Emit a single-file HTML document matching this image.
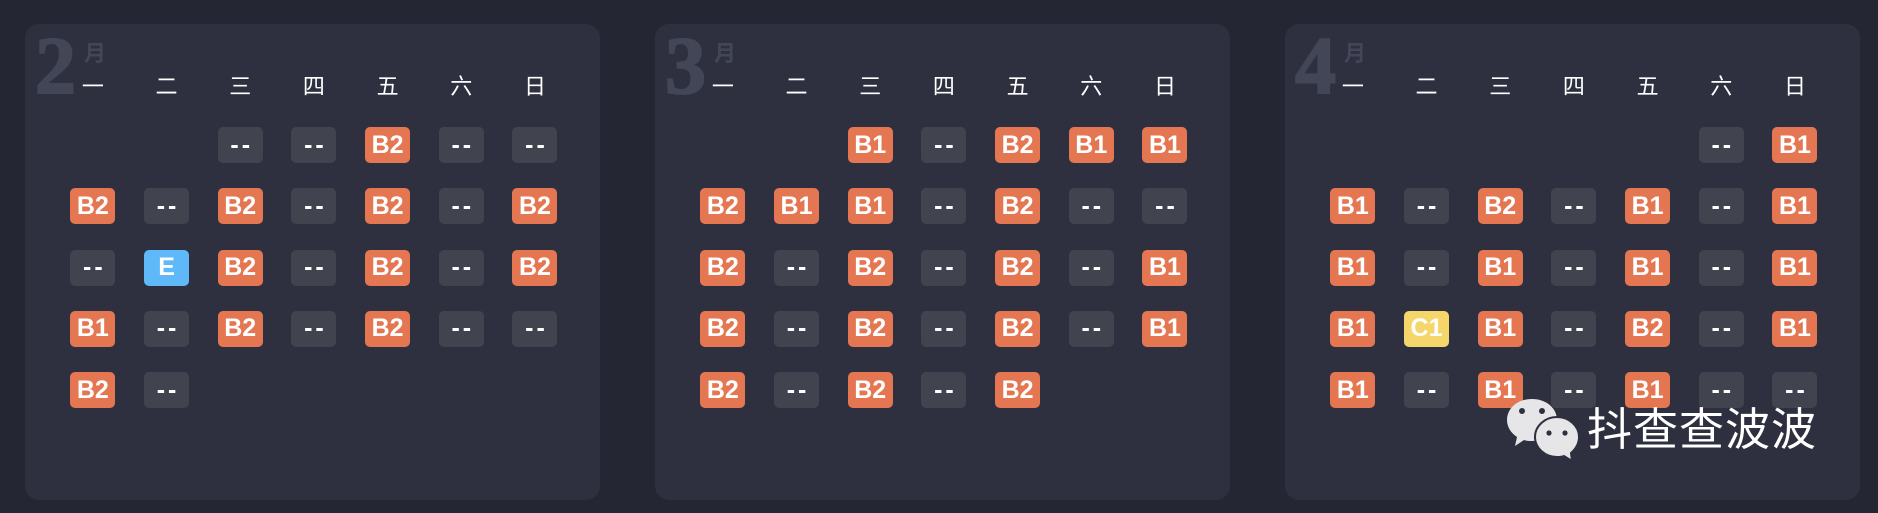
<!DOCTYPE html>
<html><head><meta charset="utf-8"><style>
*{margin:0;padding:0;box-sizing:border-box}
body{width:1878px;height:513px;background:#242633;position:relative;overflow:hidden;font-family:"Liberation Sans","Noto Sans CJK SC",sans-serif}
.p{position:absolute;top:24px;width:575px;height:476px;background:#2e3040;border-radius:14px}
.m{position:absolute;left:10px;top:1px;font-family:"Liberation Serif",serif;font-weight:900;font-size:82px;color:#424656;line-height:1;-webkit-text-stroke:2px #424656}
.y{position:absolute;left:59px;top:12px;font-family:"Noto Sans CJK SC",sans-serif;font-weight:bold;font-size:22px;color:#424656}
.h{position:absolute;left:31px;top:46px;display:flex}
.h span{width:73.7px;text-align:center;color:#fff;font-family:"Noto Sans CJK SC",sans-serif;font-size:22px;line-height:30px}
.g{position:absolute;left:31px;top:103px}
.r{display:flex;height:61.3px}
.r span{width:73.7px;display:flex;justify-content:center}
.r b{width:45px;height:36px;border-radius:5px;color:#fff;font-family:"Liberation Sans Narrow","Liberation Sans",sans-serif;font-weight:bold;font-size:25px;display:flex;align-items:center;justify-content:center}
.d{background:#41434f;letter-spacing:3px;text-indent:3px}
.o{background:#e57652}.e{background:#5fb8f8}.c{background:#f5d66a}
.wm{position:absolute;left:1587px;top:396px;color:#fff;font-family:"Noto Sans CJK SC",sans-serif;font-size:45px;line-height:60px;letter-spacing:1px}
</style></head><body>

<div class="p" style="left:25px">
<div class="m">2</div><div class="y">月</div>
<div class="h"><span>一</span><span>二</span><span>三</span><span>四</span><span>五</span><span>六</span><span>日</span></div>
<div class="g">
<div class="r"><span></span><span></span><span><b class="d">--</b></span><span><b class="d">--</b></span><span><b class="o">B2</b></span><span><b class="d">--</b></span><span><b class="d">--</b></span></div>
<div class="r"><span><b class="o">B2</b></span><span><b class="d">--</b></span><span><b class="o">B2</b></span><span><b class="d">--</b></span><span><b class="o">B2</b></span><span><b class="d">--</b></span><span><b class="o">B2</b></span></div>
<div class="r"><span><b class="d">--</b></span><span><b class="e">E</b></span><span><b class="o">B2</b></span><span><b class="d">--</b></span><span><b class="o">B2</b></span><span><b class="d">--</b></span><span><b class="o">B2</b></span></div>
<div class="r"><span><b class="o">B1</b></span><span><b class="d">--</b></span><span><b class="o">B2</b></span><span><b class="d">--</b></span><span><b class="o">B2</b></span><span><b class="d">--</b></span><span><b class="d">--</b></span></div>
<div class="r"><span><b class="o">B2</b></span><span><b class="d">--</b></span></div>
</div></div>

<div class="p" style="left:655px">
<div class="m">3</div><div class="y">月</div>
<div class="h"><span>一</span><span>二</span><span>三</span><span>四</span><span>五</span><span>六</span><span>日</span></div>
<div class="g">
<div class="r"><span></span><span></span><span><b class="o">B1</b></span><span><b class="d">--</b></span><span><b class="o">B2</b></span><span><b class="o">B1</b></span><span><b class="o">B1</b></span></div>
<div class="r"><span><b class="o">B2</b></span><span><b class="o">B1</b></span><span><b class="o">B1</b></span><span><b class="d">--</b></span><span><b class="o">B2</b></span><span><b class="d">--</b></span><span><b class="d">--</b></span></div>
<div class="r"><span><b class="o">B2</b></span><span><b class="d">--</b></span><span><b class="o">B2</b></span><span><b class="d">--</b></span><span><b class="o">B2</b></span><span><b class="d">--</b></span><span><b class="o">B1</b></span></div>
<div class="r"><span><b class="o">B2</b></span><span><b class="d">--</b></span><span><b class="o">B2</b></span><span><b class="d">--</b></span><span><b class="o">B2</b></span><span><b class="d">--</b></span><span><b class="o">B1</b></span></div>
<div class="r"><span><b class="o">B2</b></span><span><b class="d">--</b></span><span><b class="o">B2</b></span><span><b class="d">--</b></span><span><b class="o">B2</b></span></div>
</div></div>

<div class="p" style="left:1285px">
<div class="m">4</div><div class="y">月</div>
<div class="h"><span>一</span><span>二</span><span>三</span><span>四</span><span>五</span><span>六</span><span>日</span></div>
<div class="g">
<div class="r"><span></span><span></span><span></span><span></span><span></span><span><b class="d">--</b></span><span><b class="o">B1</b></span></div>
<div class="r"><span><b class="o">B1</b></span><span><b class="d">--</b></span><span><b class="o">B2</b></span><span><b class="d">--</b></span><span><b class="o">B1</b></span><span><b class="d">--</b></span><span><b class="o">B1</b></span></div>
<div class="r"><span><b class="o">B1</b></span><span><b class="d">--</b></span><span><b class="o">B1</b></span><span><b class="d">--</b></span><span><b class="o">B1</b></span><span><b class="d">--</b></span><span><b class="o">B1</b></span></div>
<div class="r"><span><b class="o">B1</b></span><span><b class="c">C1</b></span><span><b class="o">B1</b></span><span><b class="d">--</b></span><span><b class="o">B2</b></span><span><b class="d">--</b></span><span><b class="o">B1</b></span></div>
<div class="r"><span><b class="o">B1</b></span><span><b class="d">--</b></span><span><b class="o">B1</b></span><span><b class="d">--</b></span><span><b class="o">B1</b></span><span><b class="d">--</b></span><span><b class="d">--</b></span></div>
</div></div>

<svg style="position:absolute;left:1500px;top:390px" width="80" height="72" viewBox="0 0 80 72">
<path d="M32 9c-14 0-25 9-25 21 0 7 4 13 10 17l-2 9 9-6c3 1 5 1 8 1 14 0 25-9 25-21S46 9 32 9z" fill="#e6e6e8"/>
<circle cx="22" cy="21" r="3" fill="#2e3040"/><circle cx="42" cy="21" r="3" fill="#2e3040"/>
<path d="M57 27c-12 0-22 9-22 20s10 20 22 20c3 0 5 0 7-1l8 5-1-8c5-4 8-10 8-16 0-11-10-20-22-20z" fill="#e6e6e8" stroke="#2e3040" stroke-width="2"/>
<circle cx="49" cy="43" r="2.6" fill="#2e3040"/><circle cx="65" cy="43" r="2.6" fill="#2e3040"/>
</svg>
<div class="wm">抖查查波波</div>
</body></html>
